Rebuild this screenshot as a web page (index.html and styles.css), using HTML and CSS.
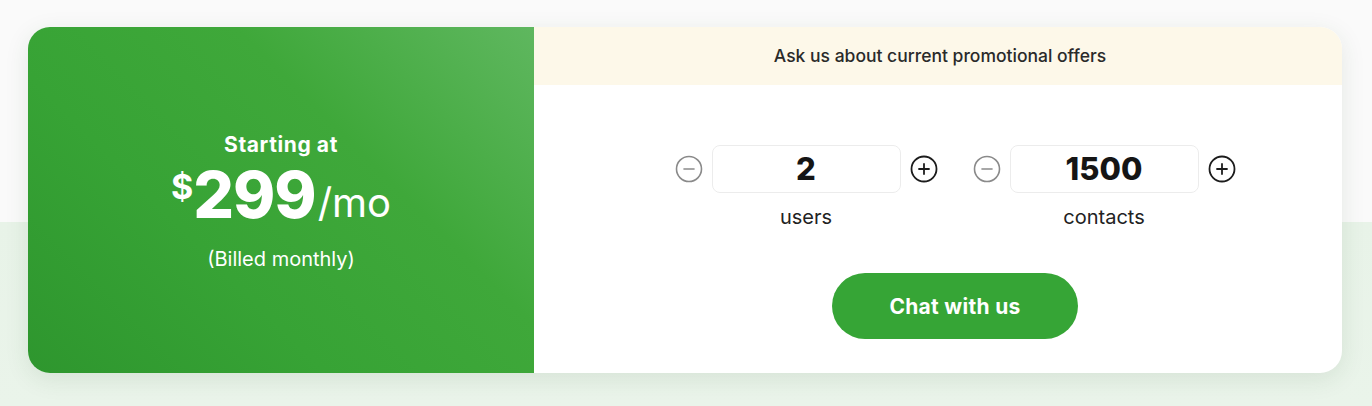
FILE: index.html
```html
<!DOCTYPE html>
<html lang="en">
<head>
<meta charset="utf-8">
<link rel="stylesheet" href="styles.css">
</head>
<body>
<div class="page">
  <div class="card">
    <div class="price-side">
      <div class="starting">Starting at</div>
      <div class="price"><span class="dollar">$</span><span class="amount">299</span><span class="per">/mo</span></div>
      <div class="billed">(Billed monthly)</div>
    </div>
    <div class="config-side">
      <div class="promo">Ask us about current promotional offers</div>
      <div class="config">
        <div class="steppers">
          <div class="stepper">
            <div class="stepper-row">
              <button class="round minus" type="button">
                <svg width="28" height="28" viewBox="0 0 28 28"><circle cx="14" cy="14" r="12.5" fill="none" stroke="#8a8a8a" stroke-width="1.6"/><path d="M9 14h10" stroke="#8a8a8a" stroke-width="1.6" stroke-linecap="round"/></svg>
              </button>
              <div class="value">2</div>
              <button class="round plus" type="button">
                <svg width="28" height="28" viewBox="0 0 28 28"><circle cx="14" cy="14" r="12.5" fill="none" stroke="#1c1c1c" stroke-width="1.8"/><path d="M9 14h10M14 9v10" stroke="#1c1c1c" stroke-width="1.8" stroke-linecap="round"/></svg>
              </button>
            </div>
            <div class="label">users</div>
          </div>
          <div class="stepper">
            <div class="stepper-row">
              <button class="round minus" type="button">
                <svg width="28" height="28" viewBox="0 0 28 28"><circle cx="14" cy="14" r="12.5" fill="none" stroke="#8a8a8a" stroke-width="1.6"/><path d="M9 14h10" stroke="#8a8a8a" stroke-width="1.6" stroke-linecap="round"/></svg>
              </button>
              <div class="value">1500</div>
              <button class="round plus" type="button">
                <svg width="28" height="28" viewBox="0 0 28 28"><circle cx="14" cy="14" r="12.5" fill="none" stroke="#1c1c1c" stroke-width="1.8"/><path d="M9 14h10M14 9v10" stroke="#1c1c1c" stroke-width="1.8" stroke-linecap="round"/></svg>
              </button>
            </div>
            <div class="label">contacts</div>
          </div>
        </div>
        <button class="chat" type="button">Chat with us</button>
      </div>
    </div>
  </div>
</div>
</body>
</html>
```

FILE: styles.css
```css
body {
    margin: 0px;
    padding: 0px;
    font-family: 'Inter', 'Lato', sans-serif;
    color: #1c1c1c;
}

.page {
    height: 406px;
    padding: 27px 30px 0px 28px;
    box-sizing: border-box;
    background: linear-gradient(to bottom, #fafafa 0px, #fafafa 222px, #e8f3e8 222px, #eaf4ea 406px);
}

.card {
    display: flex;
    height: 346px;
    border-radius: 22px;
    overflow: hidden;
    background-color: #ffffff;
    box-shadow: 0px 6px 24px rgba(40, 80, 40, 0.10);
}

.price-side {
    width: 506px;
    flex: none;
    display: flex;
    flex-direction: column;
    align-items: center;
    justify-content: center;
    padding-top: 4px;
    box-sizing: border-box;
    color: #ffffff;
    background: linear-gradient(225deg, #5fb75f 0%, #3fa83a 35%, #37a335 65%, #2e962e 100%);
}

.starting {
    font-size: 21px;
    font-weight: 700;
    line-height: 24px;
    letter-spacing: 0.6px;
}

.price {
    display: flex;
    align-items: flex-start;
    line-height: 64px;
    margin-top: 6px;
}

.dollar {
    font-size: 34px;
    font-weight: 700;
    line-height: 40px;
    margin-top: 4px;
}

.amount {
    font-size: 64px;
    font-weight: 800;
    letter-spacing: -1px;
}

.per {
    font-size: 40px;
    font-weight: 400;
    line-height: 64px;
    margin-top: 8px;
    margin-left: 2px;
}

.billed {
    font-size: 20px;
    line-height: 24px;
    margin-top: 12px;
}

.config-side {
    flex: 1;
    display: flex;
    flex-direction: column;
}

.promo {
    height: 58px;
    line-height: 58px;
    text-align: center;
    font-size: 17.5px;
    font-weight: 500;
    color: #2a2a2a;
    background-color: #fdf8e9;
    padding-left: 4px;
}

.config {
    display: flex;
    flex-direction: column;
    align-items: center;
    padding: 60px 0px 0px 34px;
}

.steppers {
    display: flex;
    gap: 35px;
}

.stepper {
    display: flex;
    flex-direction: column;
    align-items: center;
}

.stepper-row {
    display: flex;
    align-items: center;
    gap: 9px;
}

.round {
    width: 28px;
    height: 28px;
    padding: 0px;
    border: 0px;
    background: none;
    display: block;
}

.round svg {
    display: block;
}

.value {
    width: 189px;
    height: 48px;
    box-sizing: border-box;
    border: 1px solid #ececec;
    border-radius: 8px;
    text-align: center;
    font-size: 31px;
    font-weight: 800;
    line-height: 46px;
    color: #151515;
}

.label {
    font-size: 20px;
    line-height: 24px;
    margin-top: 12px;
    color: #222222;
}

.chat {
    margin-top: 44px;
    width: 246px;
    height: 66px;
    border: 0px;
    border-radius: 33px;
    background-color: #36a536;
    color: #ffffff;
    font-family: 'Inter', 'Lato', sans-serif;
    font-size: 21px;
    font-weight: 700;
    letter-spacing: 0.3px;
}
```
